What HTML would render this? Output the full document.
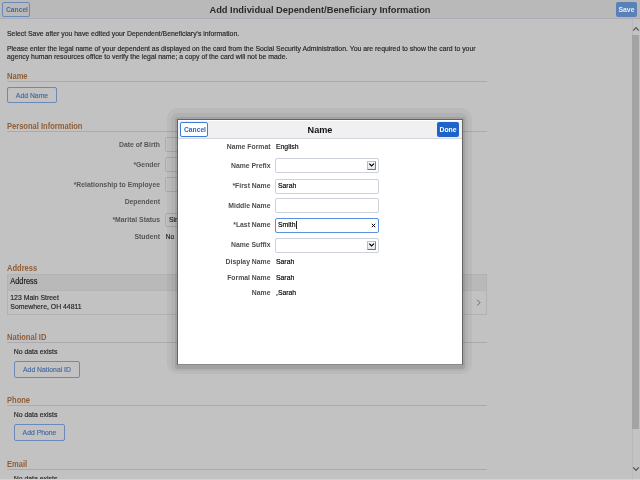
<!DOCTYPE html>
<html><head><meta charset="utf-8">
<style>
*{margin:0;padding:0;box-sizing:border-box}
html,body{width:640px;height:480px;overflow:hidden;background:#c2c2c2;font-family:"Liberation Sans",sans-serif;}
#root{position:absolute;left:0;top:0;width:640px;height:480px;will-change:transform;-webkit-text-stroke-width:0.15px}
.a{position:absolute;white-space:nowrap;line-height:1.149}
.n,.l,.ml,.mv{transform:scaleY(1.18)}
.bt{display:inline-block;transform:scaleY(1.18)}
.l,.ml,.bold{-webkit-text-stroke-width:0}
.n{font-size:6.88px;color:#262626}
.l{font-size:6.857px;color:#565656;font-weight:bold;text-align:right}
.h{font-size:7.55px;color:#8f5e38;font-weight:bold;transform:scaleY(1.2);transform-origin:0 6.83px;-webkit-text-stroke-width:0}
.ul{position:absolute;left:7px;width:480px;height:1px;background:#aaaab0}
.ob{position:absolute;border:1px solid #6b89b8;border-radius:2px;color:#46699e;font-size:6.857px;text-align:center}
.bi{position:absolute;border:1px solid #a9abb2;border-radius:1.5px}
#hdr{position:absolute;left:0;top:0;width:640px;height:19px;background:#b9b9b9;border-bottom:1px solid #aeadb5}
#sb{position:absolute;left:632px;top:19px;width:8px;height:460px;background:#c3c3c3;border-left:1px solid #b9b9b9}
#thumb{position:absolute;left:632px;top:35px;width:7px;height:394px;background:#a3a3a3}
/* modal */
.sh{position:absolute}
#modal{position:absolute;left:177px;top:119px;width:286px;height:246px;background:#fff;border:1px solid #646464;border-bottom-color:#8a8a8a}
#mh{position:absolute;left:0;top:1px;width:284px;height:18px;background:#f0f0f0;border-bottom:1px solid #d6d8e0}
.ml{font-size:6.857px;color:#4d4d4d;font-weight:bold;text-align:right}
.mv{font-size:6.857px;color:#000}
.mi{position:absolute;left:97px;width:104px;height:15px;border:1px solid #ccd1db;border-radius:2px;background:#fff}
.dd{position:absolute;left:91px;top:2px;width:9px;height:9px;border:1px solid #bdbdbd;border-right-color:#7d7d7d;border-bottom-color:#6f6f6f;border-radius:1px;background:linear-gradient(#fbfbfb,#e6e6e6)}
.dd svg{position:absolute;left:0;top:0}
</style></head><body><div id="root">
<div id="hdr"></div>
<div class="ob bold" style="left:2px;top:2px;width:28px;height:15px;font-weight:bold;line-height:13px;text-indent:1px;font-size:6.7px"><span class="bt">Cancel</span></div>
<div class="a bold" style="left:0;width:640px;text-align:center;top:4.5px;font-size:9.3px;font-weight:bold;color:#2a2a2a">Add Individual Dependent/Beneficiary Information</div>
<div class="a bold" style="left:616px;top:2px;width:21px;height:15px;background:#5a80b8;border-radius:2px;color:#e8eef6;font-size:6.857px;font-weight:bold;text-align:center;line-height:15px"><span class="bt">Save</span></div>

<div class="a n" style="left:7px;top:29.5px">Select Save after you have edited your Dependent/Beneficiary's information.</div>
<div class="a n" style="left:7px;top:44.8px">Please enter the legal name of your dependent as displayed on the card from the Social Security Administration. You are required to show the card to your</div>
<div class="a n" style="left:7px;top:53.3px">agency human resources office to verify the legal name; a copy of the card will not be made.</div>

<div class="a h" style="left:7px;top:73px">Name</div>
<div class="ul" style="top:81px"></div>
<div class="ob" style="left:7px;top:87px;width:50px;height:16px;line-height:15.2px"><span class="bt">Add Name</span></div>

<div class="a h" style="left:7px;top:123.4px">Personal Information</div>
<div class="ul" style="top:131px"></div>
<div class="a l" style="right:480px;top:141.4px">Date of Birth</div>
<div class="a l" style="right:480px;top:160.8px">*Gender</div>
<div class="a l" style="right:480px;top:180.8px">*Relationship to Employee</div>
<div class="a l" style="right:480px;top:197.6px">Dependent</div>
<div class="a l" style="right:480px;top:215.8px">*Marital Status</div>
<div class="a l" style="right:480px;top:232.8px">Student</div>
<div class="bi" style="left:165px;top:137.2px;width:60px;height:15px"></div>
<div class="bi" style="left:165px;top:157px;width:60px;height:15px"></div>
<div class="bi" style="left:165px;top:177px;width:60px;height:15px"></div>
<div class="bi" style="left:165px;top:212.5px;width:60px;height:14.5px"></div>
<div class="a n" style="left:169px;top:215.8px">Single</div>
<div class="a n" style="left:165.5px;top:232.8px">No</div>

<div class="a h" style="left:7px;top:265.2px">Address</div>
<div class="a" style="left:7px;top:273.5px;width:480px;height:41px;border:1px solid #b2b2b2"></div>
<div class="a" style="left:8px;top:274.5px;width:478px;height:16px;background:#b9b9b9;border-bottom:1px solid #b4b4b4"></div>
<div class="a n" style="left:10.3px;top:277.8px;color:#1a1a1a;font-size:7.43px">Address</div>
<div class="a n" style="left:10.3px;top:294.3px">123 Main Street</div>
<div class="a n" style="left:10.3px;top:302.6px">Somewhere, OH 44811</div>
<svg class="a" style="left:476px;top:299px" width="6" height="8" viewBox="0 0 6 8"><path d="M1.3 0.9 L4 3.7 L1.3 6.5" fill="none" stroke="#5e5e5e" stroke-width="0.9"/></svg>

<div class="a h" style="left:7px;top:334px">National ID</div>
<div class="ul" style="top:342px"></div>
<div class="a n" style="left:13.75px;top:347.8px">No data exists</div>
<div class="ob" style="left:14px;top:361px;width:66px;height:16.5px;line-height:15.5px"><span class="bt">Add National ID</span></div>

<div class="a h" style="left:7px;top:397px">Phone</div>
<div class="ul" style="top:405px"></div>
<div class="a n" style="left:13.75px;top:411.1px">No data exists</div>
<div class="ob" style="left:14px;top:424px;width:51px;height:16.5px;line-height:15.5px"><span class="bt">Add Phone</span></div>

<div class="a h" style="left:7px;top:460.8px">Email</div>
<div class="ul" style="top:469px"></div>
<div class="a n" style="left:13.75px;top:475px">No data exists</div>
<div class="a" style="left:0;top:479px;width:640px;height:1px;background:#d2d2d2"></div>

<div id="sb"></div>
<div id="thumb"></div>
<svg class="a" style="left:632px;top:25px" width="8" height="8" viewBox="0 0 8 8"><path d="M1.2 5.6 L4 2.6 L6.8 5.6" fill="none" stroke="#555" stroke-width="1.2"/></svg>
<svg class="a" style="left:632px;top:465px" width="8" height="8" viewBox="0 0 8 8"><path d="M1.2 2.4 L4 5.4 L6.8 2.4" fill="none" stroke="#555" stroke-width="1.2"/></svg>

<!-- modal shadow -->
<div class="sh" style="left:167px;top:108px;width:305px;height:266px;border-radius:11px;background:rgba(0,0,0,0.04)"></div>
<div class="sh" style="left:171px;top:113px;width:297px;height:258px;border-radius:7px;background:rgba(0,0,0,0.05)"></div>
<div class="sh" style="left:175px;top:117px;width:290px;height:252px;border-radius:3px;background:rgba(0,0,0,0.09)"></div>
<div id="modal">
  <div id="mh"></div>
  <div class="ob bold" style="left:2px;top:2px;width:28px;height:15px;font-weight:bold;line-height:13px;text-indent:1px;font-size:6.7px;background:#fff;border-color:#3f7ad6;color:#2b67c6"><span class="bt">Cancel</span></div>
  <div class="a bold" style="left:0;width:284px;text-align:center;top:4.6px;transform:scaleY(1.06);transform-origin:50% 40%;font-size:9.14px;font-weight:bold;color:#111">Name</div>
  <div class="a bold" style="left:259px;top:2px;width:22px;height:15px;background:#1f63c6;border-radius:2px;color:#fff;font-size:6.857px;font-weight:bold;text-align:center;line-height:15px"><span class="bt">Done</span></div>

  <div class="a ml" style="right:191.5px;top:23px">Name Format</div>
  <div class="a mv" style="left:98px;top:23px">English</div>
  <div class="a ml" style="right:191.5px;top:41.8px">Name Prefix</div>
  <div class="mi" style="top:38.4px"><div class="dd"><svg width="7" height="7" viewBox="0 0 7 7"><path d="M1.2 1.6 L3.6 3.9 L6 1.6" fill="none" stroke="#000" stroke-width="1.3"/></svg></div></div>
  <div class="a ml" style="right:191.5px;top:61.8px">*First Name</div>
  <div class="mi" style="top:58.5px"></div>
  <div class="a mv" style="left:100px;top:62px">Sarah</div>
  <div class="a ml" style="right:191.5px;top:81.6px">Middle Name</div>
  <div class="mi" style="top:78.3px"></div>
  <div class="a ml" style="right:191.5px;top:101.3px">*Last Name</div>
  <div class="mi" style="top:98px;border-color:#5b8fe0"></div>
  <div class="a mv" style="left:100px;top:101.4px">Smith</div>
  <div class="a" style="left:117.8px;top:101px;width:0.8px;height:8px;background:#222"></div>
  <svg class="a" style="left:193px;top:103px" width="5" height="5" viewBox="0 0 5 5"><path d="M0.8 0.8 L4.2 4.2 M4.2 0.8 L0.8 4.2" stroke="#000" stroke-width="1"/></svg>
  <div class="a ml" style="right:191.5px;top:121.3px">Name Suffix</div>
  <div class="mi" style="top:118px"><div class="dd"><svg width="7" height="7" viewBox="0 0 7 7"><path d="M1.2 1.6 L3.6 3.9 L6 1.6" fill="none" stroke="#000" stroke-width="1.3"/></svg></div></div>
  <div class="a ml" style="right:191.5px;top:138.3px">Display Name</div>
  <div class="a mv" style="left:98px;top:138.3px">Sarah</div>
  <div class="a ml" style="right:191.5px;top:153.5px">Formal Name</div>
  <div class="a mv" style="left:98px;top:153.5px">Sarah</div>
  <div class="a ml" style="right:191.5px;top:168.5px">Name</div>
  <div class="a mv" style="left:98px;top:168.5px">,Sarah</div>
</div>
</div></body></html>
